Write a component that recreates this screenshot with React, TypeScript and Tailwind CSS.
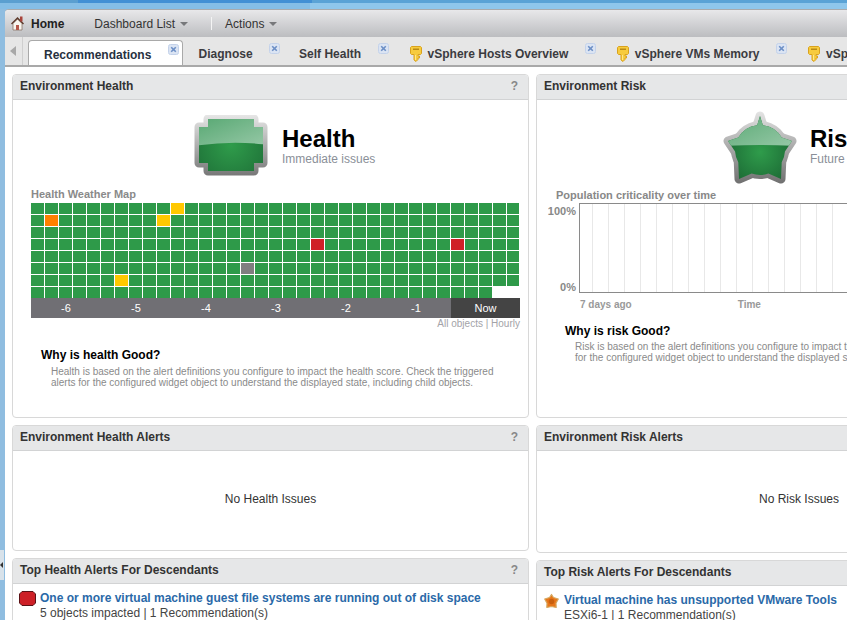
import React from "react";

const CloseIcon = () => (
  <svg width="11" height="11" viewBox="0 0 11 11" className="block">
    <rect x="0.5" y="0.5" width="10" height="10" rx="2" fill="#dbe4f3" stroke="#c4d2ea" />
    <path d="M3.2 3.2l4.6 4.6M7.8 3.2l-4.6 4.6" stroke="#6c8fc6" strokeWidth="1.6" />
  </svg>
);

const KeyIcon = () => (
  <svg width="12" height="16" viewBox="0 0 12 16" className="block">
    <path d="M1.500.5h9l1 1v6l-1 1H8v1.500h1.500V12H8v1.500L6 15.500 4 14V8.500H1.500l-1-1v-6z" fill="#f7cb3c" stroke="#d9a21e" />
    <rect x="3" y="2.500" width="6" height="1.500" fill="#b98a16" />
    <rect x="5" y="9" width="1" height="5" fill="#ffe88a" />
  </svg>
);

const HomeIcon = () => (
  <svg width="13" height="15" viewBox="0 0 13 15" className="block">
    <path d="M2 7.500L6.500 3 11 7.500V14H2z" fill="#f8f5ee" stroke="#8a7468" strokeWidth="0.8" />
    <path d="M.5 8L6.500 2l6 6" fill="none" stroke="#5d3a2c" strokeWidth="1.500" />
    <rect x="9" y="0.500" width="2.500" height="5" fill="#a8433a" />
    <rect x="5" y="9" width="3" height="5" fill="#b5574a" />
  </svg>
);

const Caret = () => <span className="inline-block ml-[5px] w-0 h-0 border-x-[4px] border-x-transparent border-t-[4px] border-t-[#77787b] align-middle" />;

const HealthBadge = () => (
  <svg width="75" height="63" viewBox="0 0 75 63" className="block shrink-0">
    <defs>
      <linearGradient id="hRim" gradientUnits="userSpaceOnUse" x1="0" y1="0" x2="0" y2="63">
        <stop offset="0" stopColor="#e6e6e6" />
        <stop offset="1" stopColor="#737373" />
      </linearGradient>
      <linearGradient id="hTop" x1="0" y1="0" x2="1" y2="1">
        <stop offset="0" stopColor="#52a56e" />
        <stop offset="1" stopColor="#98c9a8" />
      </linearGradient>
      <radialGradient id="hBot" gradientUnits="userSpaceOnUse" cx="37" cy="30" r="50">
        <stop offset="0" stopColor="#2f9c4b" />
        <stop offset="1" stopColor="#1c6a35" />
      </radialGradient>
      <clipPath id="hClip">
        <path d="M14 4h46v8h9v36h-9v8H14v-8H5V12h9z" />
      </clipPath>
    </defs>
    <path d="M14 4h46v8h9v36h-9v8H14v-8H5V12h9z" fill="url(#hRim)" stroke="url(#hRim)" strokeWidth="9" strokeLinejoin="round" />
    <g clipPath="url(#hClip)">
      <rect width="75" height="63" fill="url(#hBot)" />
      <path d="M0 0h75v30Q38 25 0 31z" fill="url(#hTop)" />
    </g>
  </svg>
);

const STAR = "M38 6L43 22 70 31 60 46 59 69 38 60 17 69 16 46 6 31 33 22z";

const RiskBadge = () => (
  <svg width="75" height="74" viewBox="0 0 75 74" className="block shrink-0">
    <defs>
      <linearGradient id="rRim" gradientUnits="userSpaceOnUse" x1="0" y1="0" x2="0" y2="74">
        <stop offset="0" stopColor="#e6e6e6" />
        <stop offset="1" stopColor="#6f6f6f" />
      </linearGradient>
      <linearGradient id="rTop" x1="0" y1="0" x2="1" y2="1">
        <stop offset="0" stopColor="#52a56e" />
        <stop offset="1" stopColor="#98c9a8" />
      </linearGradient>
      <radialGradient id="rBot" gradientUnits="userSpaceOnUse" cx="38" cy="42" r="36">
        <stop offset="0" stopColor="#2f9c4b" />
        <stop offset="1" stopColor="#1c6a35" />
      </radialGradient>
      <clipPath id="rClip">
        <path d={STAR} />
        <circle cx="38" cy="40" r="25" />
      </clipPath>
    </defs>
    <path d={STAR} fill="url(#rRim)" stroke="url(#rRim)" strokeWidth="9" strokeLinejoin="round" />
    <circle cx="38" cy="40" r="29" fill="url(#rRim)" />
    <g clipPath="url(#rClip)">
      <rect width="75" height="74" fill="url(#rBot)" />
      <path d="M0 0h75v36Q38 34 0 36z" fill="url(#rTop)" />
    </g>
  </svg>
);

const Panel = ({ title, help = true, className, children }: { title: string; help?: boolean; className: string; children?: React.ReactNode }) => (
  <section className={`border border-[#d8d8d8] rounded-[4px] bg-white overflow-hidden flex flex-col ${className}`}>
    <header className="h-[25px] shrink-0 bg-[#e6e7e8] border-b border-[#d2d3d4] pl-[7px] pr-[10px] pb-[2px] flex items-center justify-between">
      <span className="text-[12px] font-bold text-[#333]">{title}</span>
      {help && <span className="text-[12px] font-bold text-[#888]">?</span>}
    </header>
    {children}
  </section>
);

const specials: Record<string, string> = {
  "0-10": "bg-[#ffc800]",
  "1-1": "bg-[#ff8000]",
  "1-9": "bg-[#ffc800]",
  "3-20": "bg-[#cf2027]",
  "3-30": "bg-[#cf2027]",
  "5-15": "bg-[#807e80]",
  "6-6": "bg-[#ffc800]",
};

const WeatherMap = () => (
  <div className="grid grid-cols-[repeat(35,13px)] auto-rows-[11px] gap-[1px] w-[488px] h-[95px] overflow-hidden">
    {Array.from({ length: 8 * 35 - 2 }).map((_, i) => {
      const r = Math.floor(i / 35);
      const c = i % 35;
      return <div key={i} className={specials[`${r}-${c}`] ?? "bg-[#2e9a49]"} />;
    })}
  </div>
);

const tabs = [
  { label: "Recommendations", active: true },
  { label: "Diagnose" },
  { label: "Self Health" },
  { label: "vSphere Hosts Overview", key: true },
  { label: "vSphere VMs Memory", key: true },
  { label: "vSphere Datastores", key: true },
];

export default function App() {
  return (
    <div className="relative w-[847px] h-[620px] overflow-hidden flex flex-col bg-[#8fbde0] font-['Liberation_Sans',Arial,sans-serif]">
      <div className="h-[3px] shrink-0 bg-[linear-gradient(to_right,#5a9fd0_78px,#4290d4_78px,#4290d4_312px,#5aa3d6_312px)]" />
      <div className="h-[6px] shrink-0 bg-[linear-gradient(to_right,#85bee6_310px,#8fc7ec_310px)]" />
      <main className="flex-1 min-h-0 ml-[5px] bg-white rounded-tl-[4px] border-t border-[#a9abad] flex flex-col overflow-hidden">
        <nav className="h-[27px] shrink-0 bg-gradient-to-b from-[#e8e8ea] to-[#bcbdc0] flex items-center text-[12px] text-[#333]">
          <span className="ml-[6px]"><HomeIcon /></span>
          <span className="ml-[7px] font-bold text-[#222]">Home</span>
          <span className="ml-[30px]">Dashboard List<Caret /></span>
          <span className="ml-[23px] w-px h-[13px] bg-[#f4f4f4]" />
          <span className="ml-[13px]">Actions<Caret /></span>
        </nav>
        <div className="h-[30px] shrink-0 bg-[#e6e6e6] border-b-2 border-[#a9a9a9] flex items-end overflow-hidden">
          <div className="w-[18px] h-[28px] self-start shrink-0 border-r border-[#cfcfcf] flex items-center pl-[5px]">
            <span className="w-0 h-0 border-y-[5px] border-y-transparent border-r-[6px] border-r-[#a8a8a8]" />
          </div>
          <div className="ml-[5px] flex items-end shrink-0">
            {tabs.map((t) => (
              <div
                key={t.label}
                className={`h-[27px] -mb-[2px] shrink-0 flex text-[12px] font-bold ${t.active ? "bg-white border border-b-0 border-[#a9a9a9] rounded-t-[4px] text-[#27313f] pr-[2.7px] pl-[15px]" : "pl-4 pr-[3px] text-[#3b3b3f]"}`}
              >
                {t.key && <span className="ml-[2px] mr-[6px] mt-[6px]"><KeyIcon /></span>}
                <span className="mt-[7px] leading-[15px]">{t.label}</span>
                <span className="ml-[16.5px] mt-[3px]"><CloseIcon /></span>
              </div>
            ))}
          </div>
        </div>
        <div className="flex-1 min-h-0 flex gap-[7px] pl-[7px] pt-[7px] overflow-hidden">
          <div className="w-[517px] shrink-0 flex flex-col gap-[7px]">
            <Panel title="Environment Health" className="h-[344px] shrink-0">
              <div className="flex pl-[181px] pt-[15px]">
                <HealthBadge />
                <div className="ml-[13px] pt-[10px]">
                  <div className="text-[24px] leading-[27px] font-bold text-black">Health</div>
                  <div className="text-[12px] leading-[14px] text-[#8a8f98]">Immediate issues</div>
                </div>
              </div>
              <div className="ml-[18px] mt-[10px] text-[11px] leading-[13px] font-bold text-[#8a8a8a]">Health Weather Map</div>
              <div className="ml-[18px] mt-[2px]"><WeatherMap /></div>
              <div className="ml-[18px] w-[489px] h-[20px] flex text-[11px] text-white">
                {["-6", "-5", "-4", "-3", "-2", "-1"].map((l) => (
                  <div key={l} className="w-[70px] bg-[#706f74] flex items-center justify-center">{l}</div>
                ))}
                <div className="w-[69px] bg-[#444] flex items-center justify-center">Now</div>
              </div>
              <div className="ml-[18px] w-[489px] text-right text-[10px] leading-[12px] text-[#a3a3a8]">All objects | Hourly</div>
              <div className="ml-[28px] mt-[18px] text-[12px] leading-[14px] font-bold text-black">Why is health Good?</div>
              <p className="ml-[38px] mt-[4px] w-[450px] text-[10px] leading-[11px] text-[#8a8a8a]">
                Health is based on the alert definitions you configure to impact the health score. Check the triggered alerts for the configured widget object to understand the displayed state, including child objects.
              </p>
            </Panel>
            <Panel title="Environment Health Alerts" className="h-[126px] shrink-0">
              <div className="flex-1 pb-[4px] flex items-center justify-center text-[12px] text-[#333]">No Health Issues</div>
            </Panel>
            <Panel title="Top Health Alerts For Descendants" className="h-[80px] shrink-0">
              <div className="flex pl-[6px] pt-[7px]">
                <svg width="17" height="15" viewBox="0 0 17 15" className="shrink-0">
                  <path d="M3 .5h11L16.500 3v9L14 14.500H3L.5 12V3z" fill="#cd2027" stroke="#5a1216" />
                </svg>
                <div className="ml-[4px]">
                  <div className="text-[12px] leading-[15px] font-bold text-[#2a69a8]">One or more virtual machine guest file systems are running out of disk space</div>
                  <div className="text-[12px] leading-[14px] text-[#444]">5 objects impacted | 1 Recommendation(s)</div>
                </div>
              </div>
            </Panel>
          </div>
          <div className="w-[526px] shrink-0 flex flex-col gap-[7px]">
            <Panel title="Environment Risk" className="h-[344px] shrink-0">
              <div className="flex pl-[185px] pt-[10px]">
                <RiskBadge />
                <div className="ml-[13px] pt-[15px]">
                  <div className="text-[24px] leading-[27px] font-bold text-black">Risk</div>
                  <div className="text-[12px] leading-[14px] text-[#8a8f98] whitespace-nowrap">Future issues</div>
                </div>
              </div>
              <div className="ml-[19px] mt-[5px] text-[11px] leading-[13px] font-bold text-[#888]">Population criticality over time</div>
              <div className="flex mt-[1px]">
                <div className="w-[39px] mr-[3px] shrink-0 h-[90px] flex flex-col justify-between items-end text-[11px] font-bold text-[#888] pt-[2px] leading-[13px]">
                  <span>100%</span>
                  <span className="mb-[-1px]">0%</span>
                </div>
                <div className="w-[500px] h-[90px] border-l border-t border-b border-[#8a8a8a] flex">
                  <div className="w-[13px] shrink-0 border-r border-[#e8e8e8]" />
                  {Array.from({ length: 30 }).map((_, i) => (
                    <div key={i} className="w-[16px] shrink-0 border-r border-[#e8e8e8]" />
                  ))}
                </div>
              </div>
              <div className="ml-[43px] mt-[6px] flex text-[10px] leading-[12px] font-bold text-[#999]">
                <span>7 days ago</span>
                <span className="ml-[106px]">Time</span>
              </div>
              <div className="ml-[28px] mt-[13px] text-[12px] leading-[14px] font-bold text-black">Why is risk Good?</div>
              <p className="ml-[38px] mt-[3px] w-[450px] text-[10px] leading-[11px] text-[#8a8a8a]">
                Risk is based on the alert definitions you configure to impact the risk score. Check the triggered alerts for the configured widget object to understand the displayed state, including child objects.
              </p>
            </Panel>
            <Panel title="Environment Risk Alerts" className="h-[128px] shrink-0">
              <div className="flex-1 pb-[6px] flex items-center justify-center text-[12px] text-[#333]">No Risk Issues</div>
            </Panel>
            <Panel title="Top Risk Alerts For Descendants" className="h-[80px] shrink-0">
              <div className="flex pl-[6px] pt-[7px]">
                <svg width="17" height="16" viewBox="0 0 17 16" className="shrink-0">
                  <path d="M8.500 1.500l2 3 4.800 1.500-2.300 4.200.2 4.300-4.700-1-4.700 1 .2-4.300L1.700 6l4.800-1.500z" fill="#e8761a" stroke="#d6a860" strokeWidth="1.200" strokeLinejoin="round" />
                  <circle cx="8.500" cy="8.500" r="2.800" fill="#c95f0e" />
                </svg>
                <div className="ml-[4px]">
                  <div className="text-[12px] leading-[15px] font-bold text-[#2a69a8]">Virtual machine has unsupported VMware Tools</div>
                  <div className="text-[12px] leading-[14px] text-[#444]">ESXi6-1 | 1 Recommendation(s)</div>
                </div>
              </div>
            </Panel>
          </div>
        </div>
      </main>
      <div className="absolute left-0 top-[550px] w-[4px] h-[30px] bg-[#d8e2ea] flex items-center">
        <span className="w-0 h-0 border-y-[3px] border-y-transparent border-r-[3px] border-r-[#333]" />
      </div>
    </div>
  );
}
